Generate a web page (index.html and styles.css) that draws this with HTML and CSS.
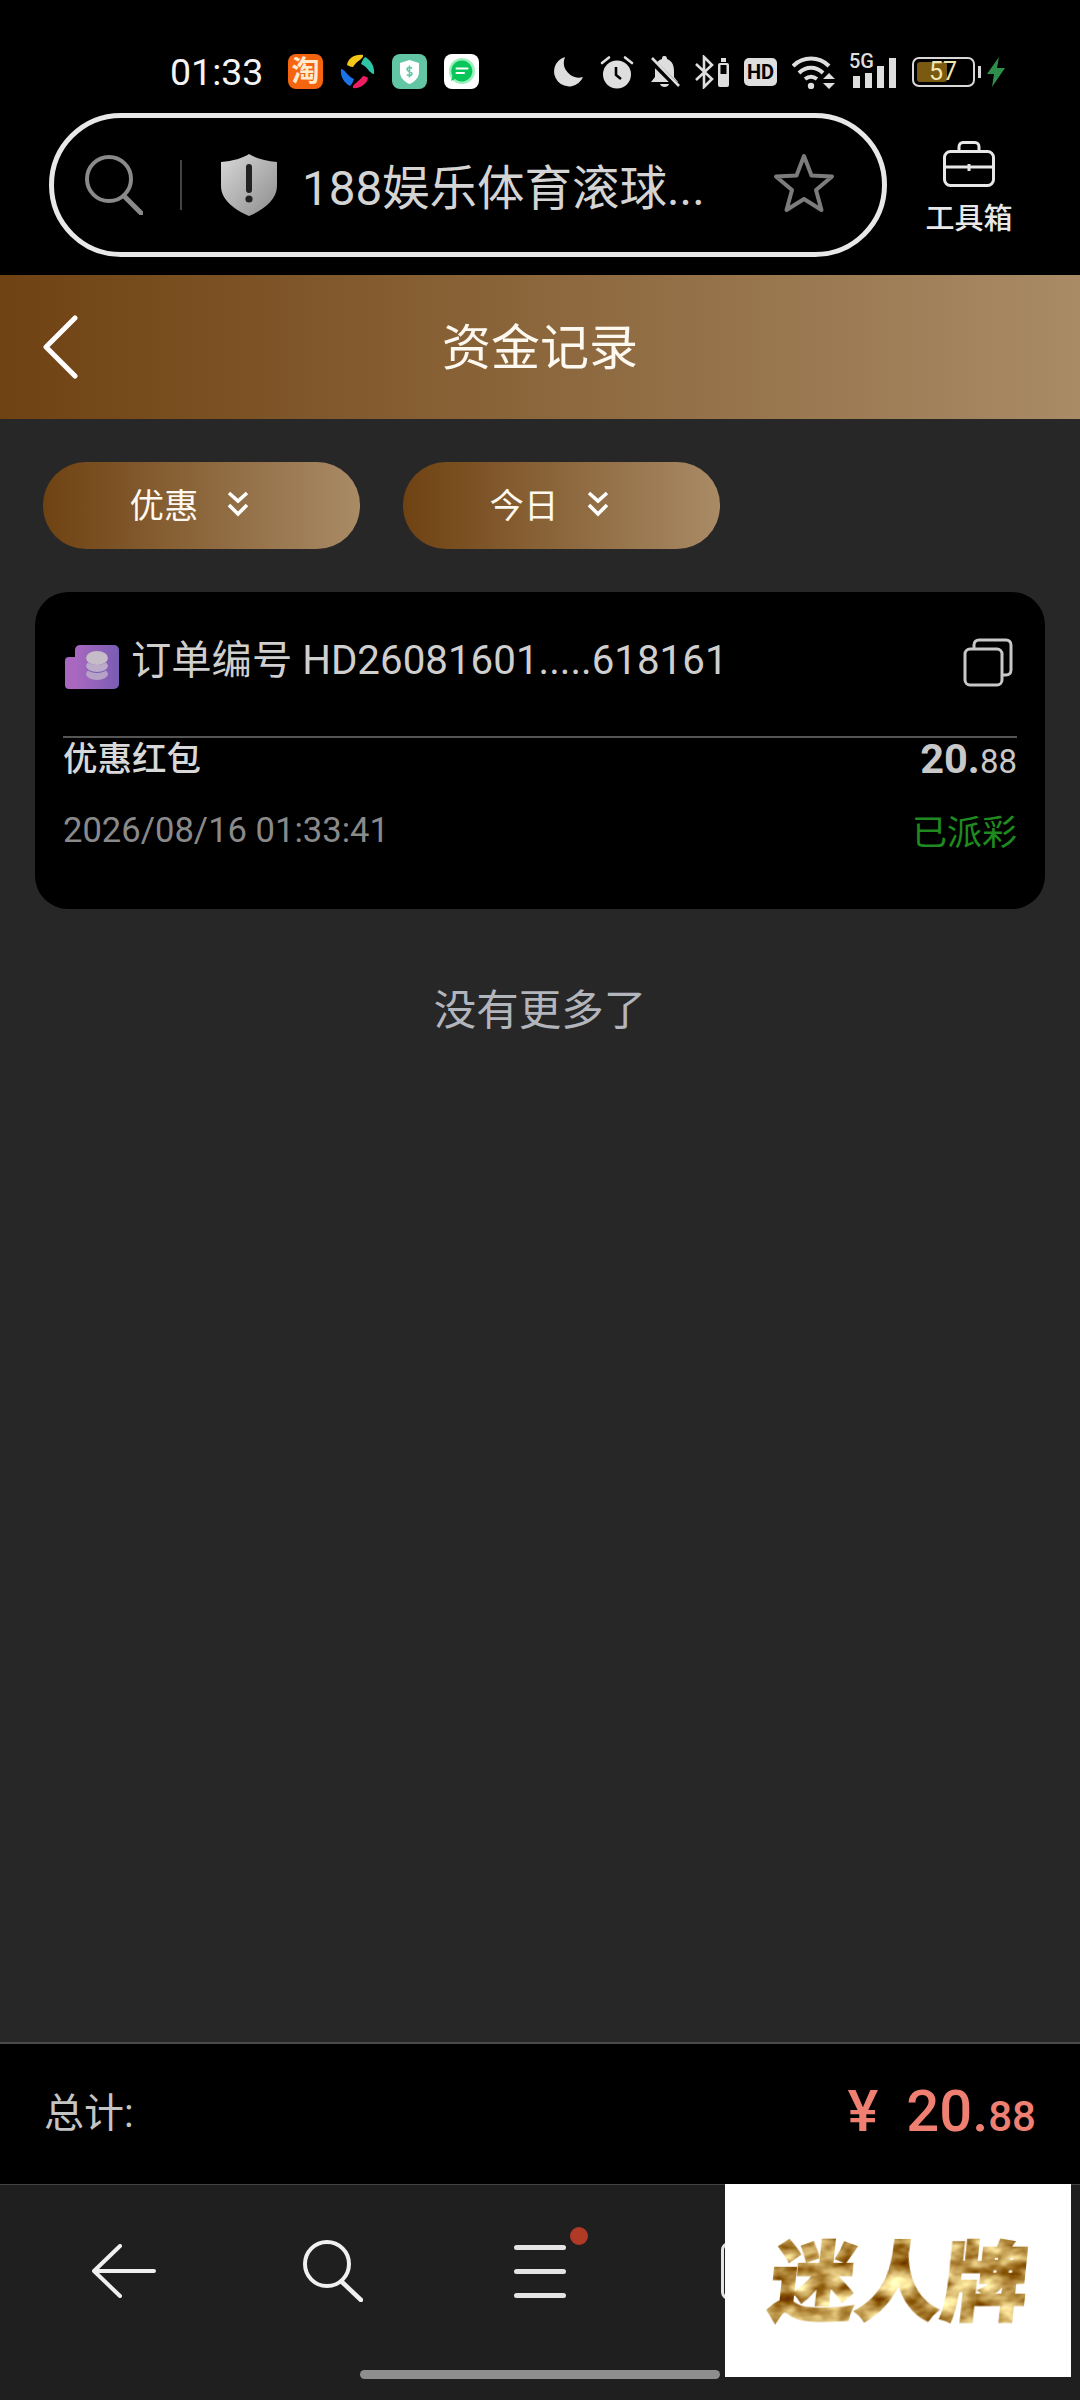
FILE: index.html
```html
<!DOCTYPE html>
<html lang="zh-CN">
<head>
    <meta charset="UTF-8">
    <meta name="viewport" content="width=device-width, initial-scale=1.0">
    <title>资金记录</title>
    <link rel="stylesheet" href="styles.css">
</head>
<body>
<div class="page">
    <div class="top-bar">
        <div class="status-bar">
            <span class="time">01:33</span>
            <div class="app-icons">
                <span class="app-icon taobao">淘</span>
                <svg class="app-icon" viewBox="0 0 35 35">
                    <path d="M7 11C8 4 15 0 23 1C24 5 17 6 13 13C11 13 9 12 7 11Z" fill="#f5c518"/>
                    <path d="M25 3C31 6 35 13 34 20C30 20 28 13 21 10C22 7 23 5 25 3Z" fill="#2ec4a6"/>
                    <path d="M28 24C27 30 20 35 13 34C12 30 18 29 23 22C25 22 27 23 28 24Z" fill="#ec1d62"/>
                    <path d="M10 32C4 29 0 22 1 15C5 15 7 22 14 25C13 28 12 30 10 32Z" fill="#1b73e8"/>
                </svg>
                <svg class="app-icon" viewBox="0 0 35 35">
                    <rect width="35" height="35" rx="8" fill="#62c6a5"/>
                    <path d="M17.5 6L27 9V18C27 24 22 28 17.5 30C13 28 8 24 8 18V9Z" fill="#fff"/>
                    <path d="M20 14.500C19 13 15 13 15 15.500C15 18 20 17 20 19.500C20 22 16 22 15 20.500M17.500 11.500V23.500" fill="none" stroke="#62c6a5" stroke-width="1.600"/>
                </svg>
                <svg class="app-icon" viewBox="0 0 35 35">
                    <rect width="35" height="35" rx="8" fill="#fff"/>
                    <circle cx="18" cy="17" r="13" fill="#9cf0bd"/>
                    <path d="M18 6.500A10.500 10.500 0 1 1 11 25L7 27L8.500 22A10.500 10.500 0 0 1 18 6.500Z" fill="#08c65a"/>
                    <path d="M12.500 14.500H23.500M12.500 19H20" stroke="#fff" stroke-width="2" stroke-linecap="round"/>
                </svg>
            </div>
            <div class="sys-icons">
                <svg class="i-moon" viewBox="0 0 32 32"><path d="M12 1A15 15 0 1 0 30 21A15 15 0 0 1 12 1Z" fill="#dedede"/></svg>
                <svg class="i-alarm" viewBox="0 0 34 34">
                    <circle cx="17" cy="19.500" r="14" fill="#dedede"/>
                    <path d="M2 8L9 2.500M32 8L25 2.500" stroke="#dedede" stroke-width="2.600" stroke-linecap="round"/>
                    <path d="M16 12V20L21 24" fill="none" stroke="#000" stroke-width="2.600"/>
                </svg>
                <svg class="i-bell" viewBox="0 0 31 34">
                    <path d="M15 1C18 1 18 3 18 4C23 6 25 10 25 16V22L29 27H2L6 22V14C6 9 9 5 13 4C13 3 13 1 15 1Z" fill="#dedede"/>
                    <path d="M11 29H20C19 33 12 33 11 29Z" fill="#dedede"/>
                    <path d="M2 5L30 33" stroke="#000" stroke-width="6"/>
                    <path d="M3 3L30 31" stroke="#dedede" stroke-width="2.600"/>
                </svg>
                <svg class="i-bt" viewBox="0 0 34 34">
                    <path d="M1 9L17 24L9 32V2L17 10L1 25" fill="none" stroke="#dedede" stroke-width="2.600"/>
                    <rect x="23" y="8" width="11" height="24" rx="2" fill="#dedede"/>
                    <rect x="26" y="3" width="5" height="4" fill="#dedede"/>
                    <rect x="25.500" y="10" width="6" height="9" fill="#000"/>
                </svg>
                <span class="i-hd">HD</span>
                <svg class="i-wifi" viewBox="0 0 43 34">
                    <path d="M1 11C11 1 27 1 37 11M7 18C14 11 24 11 31 18M13 24C17 21 21 21 25 24" fill="none" stroke="#dedede" stroke-width="4"/>
                    <circle cx="19" cy="31" r="3.200" fill="#dedede"/>
                    <path d="M31 24H43L37 18ZM31 28H43L37 34Z" fill="#dedede"/>
                </svg>
                <div class="i-signal">
                    <span class="net">5G</span>
                    <i class="bar b1"></i><i class="bar b2"></i><i class="bar b3"></i><i class="bar b4"></i>
                </div>
                <div class="i-battery">
                    <div class="batt-fill"></div>
                    <span class="batt-num">57</span>
                </div>
                <svg class="i-bolt" viewBox="0 0 18 30"><path d="M12 0L0 17H7L5 30L18 11H10Z" fill="#2f8f4a"/></svg>
            </div>
        </div>
        <div class="url-row">
            <div class="url-box">
                <svg class="url-search" viewBox="0 0 58 60"><circle cx="24" cy="24" r="22" fill="none" stroke="#8a8a8a" stroke-width="4"/><path d="M39 41L56 58" stroke="#8a8a8a" stroke-width="5" stroke-linecap="round"/></svg>
                <span class="url-sep"></span>
                <svg class="url-shield" viewBox="0 0 56 62">
                    <defs><linearGradient id="sh" x1="0" y1="0" x2="1" y2="1"><stop offset="0" stop-color="#d8d8d8"/><stop offset="1" stop-color="#8c8c8c"/></linearGradient></defs>
                    <path d="M28 0C34 4 44 7 56 8V32C56 46 42 56 28 62C14 56 0 46 0 32V8C12 7 22 4 28 0Z" fill="url(#sh)"/>
                    <path d="M28 13V36" stroke="#222" stroke-width="6" stroke-linecap="round"/>
                    <circle cx="28" cy="45" r="3.600" fill="#222"/>
                </svg>
                <span class="url-text">188娱乐体育滚球...</span>
                <svg class="url-star" viewBox="0 0 62 60"><path d="M31 3L38.500 22.500L59 23.500L43 37L48.500 57L31 46L13.500 57L19 37L3 23.500L23.500 22.500Z" fill="none" stroke="#7c7c7c" stroke-width="4" stroke-linejoin="round"/></svg>
            </div>
            <div class="toolbox">
                <svg class="toolbox-icon" viewBox="0 0 52 46">
                    <rect x="1.500" y="10.500" width="49" height="34" rx="6" fill="none" stroke="#e8e8e8" stroke-width="3"/>
                    <path d="M16 10V6C16 3 18 1.500 20 1.500H32C34 1.500 36 3 36 6V10M1.500 26H50.500M26 23V30" fill="none" stroke="#e8e8e8" stroke-width="3"/>
                </svg>
                <span class="toolbox-label">工具箱</span>
            </div>
        </div>
    </div>

    <div class="title-bar">
        <svg class="back" viewBox="0 0 36 64"><path d="M33 3L4 32L33 61" fill="none" stroke="#fff" stroke-width="5" stroke-linecap="round" stroke-linejoin="round"/></svg>
        <h1 class="title">资金记录</h1>
    </div>

    <main class="content">
        <div class="filters">
            <button class="pill">优惠
                <svg class="pill-arrow" viewBox="0 0 22 26"><path d="M2 2L11 10L20 2M2 14L11 23L20 14" fill="none" stroke="#fff" stroke-width="3.600"/></svg>
            </button>
            <button class="pill">今日
                <svg class="pill-arrow" viewBox="0 0 22 26"><path d="M2 2L11 10L20 2M2 14L11 23L20 14" fill="none" stroke="#fff" stroke-width="3.600"/></svg>
            </button>
        </div>

        <div class="card">
            <div class="order-row">
                <svg class="coin-icon" viewBox="0 0 54 44">
                    <defs><linearGradient id="pu" x1="0" y1="0" x2="1" y2="0"><stop offset="0" stop-color="#a868c0"/><stop offset="1" stop-color="#7a5cb4"/></linearGradient></defs>
                    <rect x="0" y="12" width="30" height="32" rx="4" fill="#a868c0"/>
                    <rect x="10" y="0" width="44" height="44" rx="5" fill="url(#pu)"/>
                    <ellipse cx="32" cy="29" rx="11" ry="6" fill="#b5a2c6"/>
                    <ellipse cx="32" cy="22" rx="11" ry="6" fill="#7a5cb4"/>
                    <ellipse cx="32" cy="21" rx="11" ry="6" fill="#bcaac8"/>
                    <ellipse cx="32" cy="14" rx="11" ry="6" fill="#7a5cb4"/>
                    <ellipse cx="32" cy="13" rx="11" ry="7" fill="#c6bcc8"/>
                </svg>
                <span class="order-no">订单编号 HD26081601.....618161</span>
                <svg class="copy-icon" viewBox="0 0 50 49">
                    <path d="M11 10V7C11 4 13 2 16 2H43C46 2 48 4 48 7V32C48 35 46 37 43 37H39" fill="none" stroke="#c8c8c8" stroke-width="3"/>
                    <rect x="2" y="11" width="37" height="36" rx="5" fill="#000" stroke="#c8c8c8" stroke-width="3"/>
                </svg>
            </div>
            <div class="type-row">
                <span class="type">优惠红包</span>
                <span class="amount"><b>20.</b>88</span>
            </div>
            <div class="date-row">
                <span class="date">2026/08/16 01:33:41</span>
                <span class="state">已派彩</span>
            </div>
        </div>

        <p class="no-more">没有更多了</p>
    </main>

    <div class="total-bar">
        <span class="total-label">总计:</span>
        <span class="total-num"><span class="yen">¥</span>20.<small>88</small></span>
    </div>

    <nav class="browser-nav">
        <div class="nav-icons">
            <svg class="nav-back" viewBox="0 0 64 54"><path d="M28 2L2 27L28 52M2 27H62" fill="none" stroke="#f0f0f0" stroke-width="4" stroke-linecap="round" stroke-linejoin="round"/></svg>
            <svg class="nav-search" viewBox="0 0 60 62"><circle cx="24" cy="24" r="22" fill="none" stroke="#f0f0f0" stroke-width="4"/><path d="M39 42L58 60" stroke="#f0f0f0" stroke-width="4.500" stroke-linecap="round"/></svg>
            <div class="nav-menu">
                <i></i><i></i><i></i>
                <span class="red-dot"></span>
            </div>
            <span class="nav-tabs"></span>
        </div>
        <div class="home-bar"></div>
    </nav>

    <div class="ad">
        <svg class="ad-defs" width="0" height="0">
            <filter id="gold" x="0" y="0" width="100%" height="100%" color-interpolation-filters="sRGB">
                <feTurbulence type="fractalNoise" baseFrequency="0.035 0.06" numOctaves="3" seed="4"/>
                <feColorMatrix type="matrix" values="1 0 0 0 0.26  1.25 0 0 0 -0.01  1.3 0 0 0 -0.33  0 0 0 0 1" result="marble"/>
                <feComposite in="marble" in2="SourceAlpha" operator="in"/>
            </filter>
        </svg>
        <span class="ad-text">迷人牌</span>
    </div>
</div>
</body>
</html>
```

FILE: styles.css
```css
* {
    box-sizing: border-box;
}
body {
    margin: 0;
    background-color: #272727;
    font-family: Roboto, "Noto Sans CJK SC", sans-serif;
}
.page {
    position: relative;
    display: flex;
    flex-direction: column;
    width: 1080px;
    height: 2400px;
    overflow: hidden;
}

/* phone status + address bar */
.top-bar {
    background-color: #000;
    padding-bottom: 18px;
}
.status-bar {
    display: flex;
    align-items: center;
    height: 113px;
    padding: 30px 75px 0 170px;
}
.time {
    width: 93px;
    font-size: 37.5px;
    color: #f4f4f4;
    white-space: nowrap;
}
.app-icons {
    display: flex;
    gap: 17px;
    margin-left: 25px;
}
.app-icon {
    display: block;
    width: 35px;
    height: 35px;
}
.taobao {
    border-radius: 8px;
    background-color: #f5640f;
    color: #ffeccf;
    font-size: 28px;
    font-weight: 700;
    line-height: 35px;
    text-align: center;
}
.sys-icons {
    display: flex;
    align-items: center;
    gap: 15px;
    margin-left: auto;
}
.i-moon { width: 32px; height: 32px; }
.i-alarm { width: 34px; height: 34px; }
.i-bell { width: 31px; height: 34px; }
.i-bt { width: 34px; height: 34px; }
.i-wifi { width: 43px; height: 34px; }
.i-bolt { width: 18px; height: 30px; margin-left: -10px; }
.i-hd {
    width: 33px;
    height: 28px;
    border-radius: 5px;
    background-color: #dedede;
    color: #000;
    font-size: 20px;
    font-weight: 700;
    line-height: 28px;
    text-align: center;
}
.i-signal {
    display: flex;
    align-items: flex-end;
    position: relative;
    gap: 5px;
    width: 47px;
    height: 32px;
    padding-left: 3px;
}
.net {
    position: absolute;
    left: -1px;
    top: -3px;
    color: #dedede;
    font-size: 20px;
    font-weight: 500;
    line-height: 17px;
}
.bar {
    width: 7px;
    background-color: #dedede;
}
.b1 { height: 12px; }
.b2 { height: 15px; }
.b3 { height: 22px; }
.b4 { height: 30px; }
.i-battery {
    position: relative;
    width: 63px;
    height: 30px;
    margin-right: 7px;
    border: 2px solid #d8d8d8;
    border-radius: 7px;
}
.i-battery::after {
    content: "";
    position: absolute;
    right: -8px;
    top: 7px;
    width: 3px;
    height: 12px;
    background-color: #d8d8d8;
}
.batt-fill {
    position: absolute;
    left: 3px;
    top: 3px;
    bottom: 3px;
    width: 30px;
    border-radius: 3px;
    background-color: #7a5a10;
}
.batt-num {
    position: absolute;
    left: 15px;
    top: 0;
    color: #f2e6b0;
    font-size: 25px;
    line-height: 26px;
}
.url-row {
    display: flex;
    align-items: center;
    height: 144px;
    padding-left: 49px;
}
.url-box {
    display: flex;
    align-items: center;
    width: 838px;
    height: 144px;
    padding-left: 31px;
    border: 5px solid #e8e8e8;
    border-radius: 72px;
}
.url-search { width: 58px; height: 60px; }
.url-sep {
    width: 2px;
    height: 50px;
    margin-left: 37px;
    background-color: #444;
}
.url-shield { width: 56px; height: 62px; margin-left: 39px; }
.url-text {
    margin: 0 0 2px 25px;
    width: 471px;
    color: #d4d4d4;
    font-size: 47.500px;
    white-space: nowrap;
}
.url-star { width: 62px; height: 60px; margin-top: -4px; }
.toolbox {
    display: flex;
    flex-direction: column;
    align-items: center;
    width: 88px;
    margin-left: 38px;
    padding-top: 6px;
}
.toolbox-icon { width: 52px; height: 46px; }
.toolbox-label {
    margin-top: 15px;
    color: #e8e8e8;
    font-size: 29px;
    font-weight: 500;
    line-height: 34px;
    white-space: nowrap;
}

/* title */
.title-bar {
    position: relative;
    display: flex;
    align-items: center;
    justify-content: center;
    height: 144px;
    background: linear-gradient(90deg, #6f4212, #a98b66);
}
.back {
    position: absolute;
    left: 42px;
    top: 40px;
    width: 36px;
    height: 64px;
}
.title {
    margin: 0 0 8px;
    color: #fdf8f0;
    font-size: 49px;
    font-weight: 400;
}

/* list */
.content {
    flex: 1;
    background-color: #272727;
}
.filters {
    display: flex;
    gap: 43px;
    padding: 43px 0 0 43px;
}
.pill {
    display: flex;
    align-items: center;
    justify-content: center;
    gap: 28px;
    width: 317px;
    height: 87px;
    padding: 0 25px 6px 0;
    border: none;
    border-radius: 43px;
    background: linear-gradient(90deg, #6f4212, #a98b66);
    color: #fdf8f0;
    font-family: inherit;
    font-size: 34.500px;
}
.pill-arrow {
    width: 22px;
    height: 26px;
    margin-top: 3px;
}
.card {
    height: 317px;
    margin: 43px 35px 0;
    padding: 47px 28px 0;
    border-radius: 33px;
    background-color: #000;
}
.order-row {
    display: flex;
    align-items: center;
    height: 99px;
    padding: 0 4px 50px 2px;
    border-bottom: 2px solid #555;
}
.coin-icon {
    width: 54px;
    height: 44px;
    margin-top: 8px;
}
.order-no {
    margin: 0 0 12px 12px;
    color: #cfcfcf;
    font-size: 40.300px;
    white-space: nowrap;
}
.copy-icon {
    width: 50px;
    height: 49px;
    margin-left: auto;
}
.type-row,
.date-row {
    display: flex;
    align-items: center;
    justify-content: space-between;
    height: 40px;
}
.type {
    margin-bottom: 5px;
    color: #d8d8d8;
    font-size: 34.500px;
    font-weight: 500;
}
.amount {
    color: #c8c8c8;
    font-size: 33px;
}
.amount b {
    font-size: 41.500px;
    font-weight: 700;
}
.date-row {
    margin-top: 32px;
}
.date {
    color: #8a8a8a;
    font-size: 34.600px;
}
.state {
    margin-bottom: 2px;
    color: #1f8a1f;
    font-size: 35px;
}
.no-more {
    margin: 81px 0 0;
    color: #b3b5bd;
    font-size: 42.500px;
    line-height: 42px;
    text-align: center;
}

/* total */
.total-bar {
    display: flex;
    align-items: center;
    justify-content: space-between;
    height: 142px;
    padding: 0 44px;
    border-top: 2px solid #4a4a4a;
    background-color: #000;
}
.total-label {
    margin-bottom: 8px;
    color: #c4c4c4;
    font-size: 40px;
}
.total-num {
    margin-bottom: 6px;
    color: #ef7f70;
    font-size: 58px;
    font-weight: 500;
}
.yen {
    margin-right: 28px;
}
.total-num small {
    font-size: 42px;
}

/* browser bar */
.browser-nav {
    position: relative;
    height: 216px;
    border-top: 1px solid #444;
    background-color: #1f1f1f;
}
.nav-icons {
    display: flex;
    align-items: center;
    height: 170px;
    padding: 2px 0 0 92px;
}
.nav-back { width: 64px; height: 54px; }
.nav-search { width: 60px; height: 62px; margin-left: 147px; }
.nav-menu {
    position: relative;
    display: flex;
    flex-direction: column;
    gap: 19px;
    width: 52px;
    margin-left: 151px;
}
.nav-menu i {
    height: 5px;
    border-radius: 3px;
    background-color: #e4e4e4;
}
.red-dot {
    position: absolute;
    left: 56px;
    top: -18px;
    width: 18px;
    height: 18px;
    border-radius: 50%;
    background-color: #b03a26;
}
.nav-tabs {
    width: 40px;
    height: 58px;
    margin-left: 155px;
    border: 3px solid #e4e4e4;
    border-radius: 8px;
}
.home-bar {
    position: absolute;
    left: 360px;
    top: 185px;
    width: 360px;
    height: 9px;
    border-radius: 5px;
    background-color: #8e8e8e;
}

/* floating ad over the nav */
.ad {
    position: absolute;
    left: 725px;
    top: 2184px;
    display: flex;
    align-items: center;
    justify-content: center;
    width: 346px;
    height: 193px;
    background-color: #fff;
}
.ad-defs {
    position: absolute;
}
.ad-text {
    margin: -8px 0 0 4px;
    color: #c8962a;
    font-family: "Noto Sans CJK SC", sans-serif;
    font-size: 86px;
    font-weight: 900;
    line-height: 100px;
    white-space: nowrap;
    -webkit-text-stroke: 2px #c8962a;
    filter: url(#gold);
    transform: skewX(-6deg);
}
```
